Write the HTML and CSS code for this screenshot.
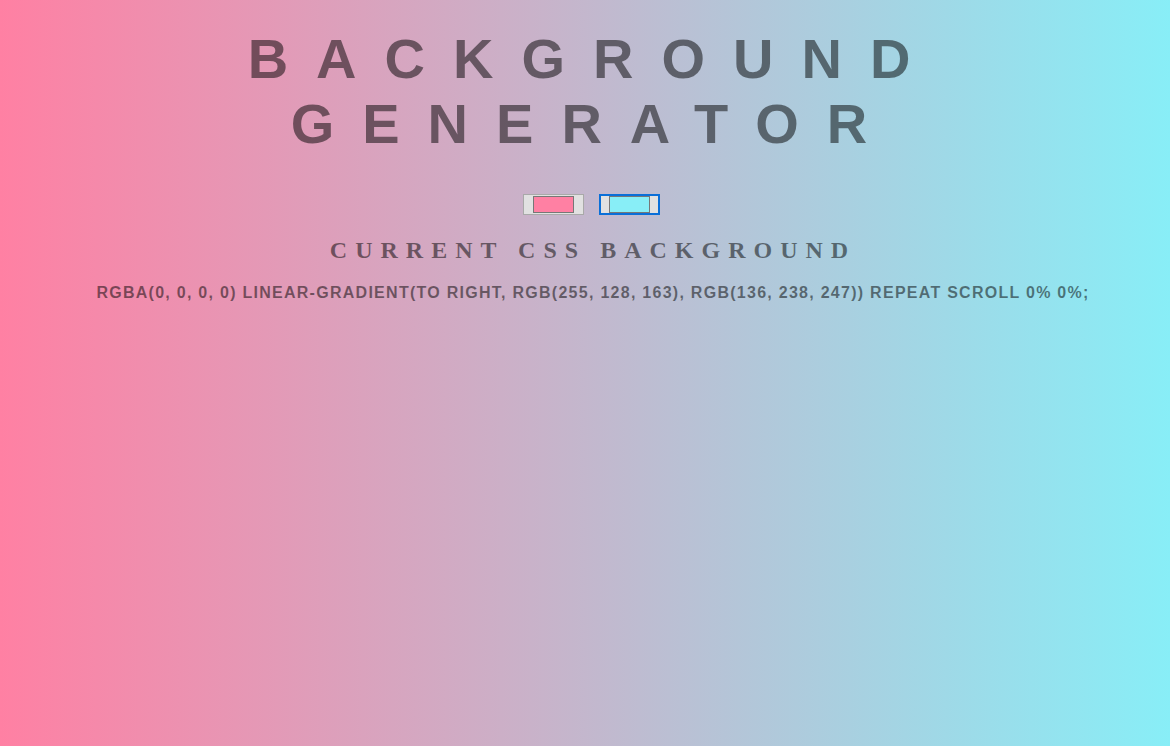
FILE: index.html
```html
<!DOCTYPE html>
<html lang="en">
<head>
<meta charset="utf-8">
<title>Background Generator</title>
<link rel="stylesheet" href="styles.css">
</head>
<body class="page">
  <h1 class="title">Background Generator</h1>
  <div class="pickers">
    <span class="picker"><span class="swatch swatch-pink"></span></span>
    <span class="picker picker-focused"><span class="swatch swatch-cyan"></span></span>
  </div>
  <h2 class="label">Current CSS Background</h2>
  <h3 class="value">rgba(0, 0, 0, 0) linear-gradient(to right, rgb(255, 128, 163), rgb(136, 238, 247)) repeat scroll 0% 0%;</h3>
</body>
</html>
```
FILE: styles.css
```css
html {
  height: 100%;
}

.page {
  margin: 0;
  min-height: 100%;
  box-sizing: border-box;
  padding: 26px 0 0 16px;
  background: linear-gradient(to right, rgb(255, 128, 163), rgb(136, 238, 247));
  color: rgba(0, 0, 0, 0.5);
  font-family: "Liberation Serif", "Times New Roman", serif;
  font-size: 16px;
  text-align: center;
  text-transform: uppercase;
  letter-spacing: 8px;
}

.title {
  margin: 0;
  font-family: "Liberation Sans", Arial, sans-serif;
  font-weight: 700;
  font-size: 56px;
  line-height: normal;
  letter-spacing: 28px;
}

.pickers {
  display: flex;
  justify-content: center;
  gap: 15px;
  margin-top: 38px;
  padding-right: 4px;
  letter-spacing: 0;
}

.picker {
  display: flex;
  box-sizing: border-box;
  width: 61px;
  height: 21px;
  padding: 1px 9px;
  border: 1px solid #a9a9a9;
  background: #e1e1e1;
}

.picker-focused {
  border: 2px solid #0a6fd8;
  padding: 0 8px;
}

.swatch {
  flex: 1;
  border: 1px solid #777777;
}

.swatch-pink {
  background: rgb(255, 128, 163);
}

.swatch-cyan {
  background: rgb(136, 238, 247);
}

.label {
  margin: 22px 0 0;
  font-family: "Liberation Serif", "Times New Roman", serif;
  font-weight: 700;
  font-size: 24px;
  line-height: normal;
}

.value {
  margin: 20px 0 0;
  font-family: "Liberation Sans", Arial, sans-serif;
  font-weight: 700;
  font-size: 16px;
  line-height: normal;
  letter-spacing: 1.27px;
}
```
